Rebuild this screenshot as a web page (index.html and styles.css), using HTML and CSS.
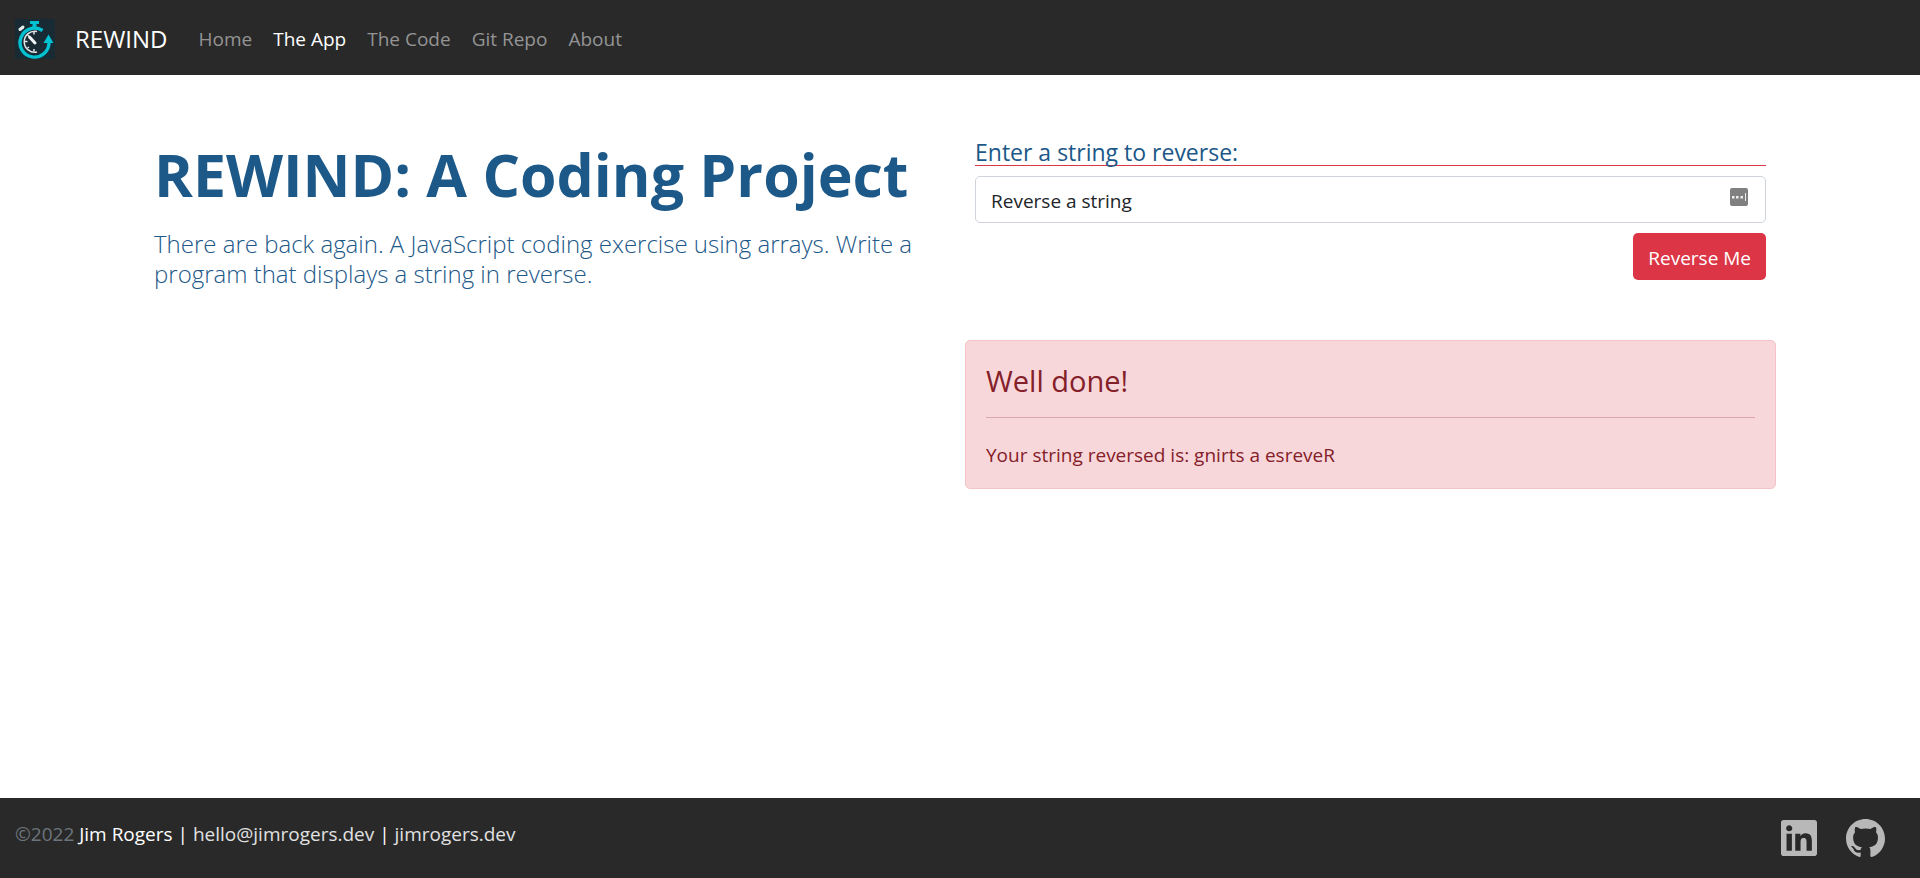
FILE: index.html
```html
<!DOCTYPE html>
<html lang="en">
<head>
<meta charset="utf-8">
<meta name="viewport" content="width=device-width, initial-scale=1">
<title>REWIND</title>
<link rel="stylesheet" href="styles.css">
</head>
<body>
<header class="navbar">
  <a class="brand" href="#">
    <svg class="brand-logo" viewBox="0 0 40 40" aria-hidden="true">
      <rect width="40" height="40" fill="#182a33"/>
      <path d="M15 2h9v3h-2.500v4h-4V5H15z" fill="#00c2d1"/>
      <path d="M27.500 11.500A14.500 14.500 0 1 0 34 23" fill="none" stroke="#00c2d1" stroke-width="3.400"/>
      <path d="M33.500 15.500 38.500 24h-10z" fill="#00c2d1"/>
      <path d="M22 12.500A10.500 10.500 0 1 0 22 33" fill="none" stroke="#dfe7ea" stroke-width="1.500"/>
      <path d="M19 13v2.500M10 22.500h2.500M19 30v2.500M12.500 16l1.500 1M12.500 29l1.500-1" stroke="#dfe7ea" stroke-width="1.500"/>
      <path d="M14.500 18 20 24" stroke="#f0f4f5" stroke-width="3" stroke-linecap="round"/>
      <path d="M5 10.500 8 8" stroke="#e8eeee" stroke-width="3" stroke-linecap="round"/>
    </svg>
    <span>REWIND</span>
  </a>
  <nav class="nav-links">
    <a class="nav-link" href="#">Home</a>
    <a class="nav-link active" href="#">The App</a>
    <a class="nav-link" href="#">The Code</a>
    <a class="nav-link" href="#">Git Repo</a>
    <a class="nav-link" href="#">About</a>
  </nav>
</header>

<main class="container">
  <section class="intro">
    <h1>REWIND: A Coding Project</h1>
    <p>There are back again. A JavaScript coding exercise using arrays. Write a program that displays a string in reverse.</p>
  </section>
  <section class="app">
    <form class="reverse-form">
      <label class="form-label" for="userString">Enter a string to reverse:</label>
      <div class="field">
        <input class="form-input" type="text" id="userString" value="Reverse a string">
        <svg class="field-icon" viewBox="0 0 18 18" aria-hidden="true">
          <rect width="18" height="18" rx="2" fill="#808080"/>
          <path d="M2 8h2.500v2.500H2zM6 8h2.500v2.500H6zM10.500 8H13v2.500h-2.500zM15 5h1v8h-1z" fill="#eee"/>
        </svg>
      </div>
      <button class="btn" type="button">Reverse Me</button>
    </form>
    <div class="alert" role="alert">
      <h2>Well done!</h2>
      <hr>
      <p>Your string reversed is: gnirts a esreveR</p>
    </div>
  </section>
</main>

<footer class="footer">
  <p class="copyright">©2022 <span>Jim Rogers | <a href="#">hello@jimrogers.dev</a> | <a href="#">jimrogers.dev</a></span></p>
  <div class="social">
    <a href="#" aria-label="LinkedIn">
      <svg class="linkedin" viewBox="0 0 448 448" aria-hidden="true"><path fill="currentColor" d="M416 0H31.900C14.300 0 0 14.500 0 32.300v383.400C0 433.500 14.300 448 31.900 448H416c17.600 0 32-14.500 32-32.300V32.300C448 14.500 433.600 0 416 0zM135.400 384H69V170.200h66.500V384zm-33.200-243c-21.300 0-38.500-17.300-38.500-38.500S80.900 64 102.200 64c21.200 0 38.500 17.300 38.500 38.500 0 21.300-17.200 38.500-38.500 38.500zm282.100 243h-66.400V280c0-24.800-.5-56.700-34.500-56.700-34.600 0-39.900 27-39.900 54.900V384h-66.400V170.200h63.700v29.200h.9c8.900-16.800 30.600-34.500 62.900-34.500 67.200 0 79.700 44.300 79.700 101.900V384z"/></svg>
    </a>
    <a href="#" aria-label="GitHub">
      <svg class="github" viewBox="0 0 16 16" aria-hidden="true"><path fill="currentColor" d="M8 0C3.580 0 0 3.580 0 8c0 3.540 2.290 6.530 5.470 7.590.4.070.55-.17.55-.38 0-.19-.01-.82-.01-1.490-2.010.37-2.530-.49-2.690-.94-.09-.23-.48-.94-.82-1.130-.28-.15-.68-.52-.01-.53.63-.01 1.080.58 1.230.82.72 1.210 1.870.87 2.330.66.07-.52.28-.87.51-1.070-1.780-.2-3.640-.89-3.640-3.950 0-.87.31-1.590.82-2.150-.08-.2-.36-1.020.08-2.120 0 0 .67-.21 2.200.82.64-.18 1.320-.27 2-.27s1.360.09 2 .27c1.530-1.040 2.200-.82 2.200-.82.44 1.100.16 1.920.08 2.120.51.56.82 1.270.82 2.150 0 3.070-1.870 3.750-3.650 3.950.29.25.54.73.54 1.480 0 1.070-.01 1.930-.01 2.200 0 .21.15.46.55.38A8.010 8.010 0 0 0 16 8c0-4.420-3.580-8-8-8z"/></svg>
    </a>
  </div>
</footer>
</body>
</html>
```

FILE: styles.css
```css
*, *::before, *::after { box-sizing: border-box; }

body {
  margin: 0;
  min-height: 100vh;
  display: flex;
  flex-direction: column;
  font: 19px/30px "Segoe UI", "Open Sans", "Noto Sans", sans-serif;
  color: #212529;
  background: #fff;
}

h1, h2, p { margin: 0; }
a { color: inherit; text-decoration: none; }

.navbar {
  display: flex;
  align-items: center;
  min-height: 75px;
  padding: 12px 15px 10px;
  gap: 21px;
  background: #292929;
}
.brand {
  display: flex;
  align-items: center;
  gap: 20px;
  color: #fff;
  font-size: 24px;
  line-height: 38px;
}
.brand-logo { width: 40px; height: 40px; }
.nav-links { display: flex; gap: 1px; }
.nav-link { padding: 10px; color: #949494; }
.nav-link.active { color: #fff; }

.container {
  flex: 1;
  width: 85%;
  margin: 0 auto;
  padding-top: 60px;
  display: grid;
  grid-template-columns: 1fr 1fr;
  gap: 10px;
  align-items: start;
}
.intro { padding: 0 10px; color: #1c5888; }
.intro h1 {
  font-size: 59px;
  line-height: 78px;
  font-weight: 700;
  margin-bottom: 16px;
}
.intro p { font-size: 24px; line-height: 30px; font-weight: 300; }

.reverse-form {
  display: flex;
  flex-direction: column;
  align-items: flex-end;
  gap: 10px;
  padding: 0 10px;
}
.form-label {
  width: 100%;
  padding-top: 4px;
  border-bottom: 1px solid #dc3545;
  color: #1c5888;
  font-size: 23px;
  line-height: 26px;
}
.field { position: relative; width: 100%; }
.form-input {
  display: block;
  width: 100%;
  height: 47px;
  padding: 8px 50px 6px 15px;
  border: 1px solid #ced4da;
  border-radius: 5px;
  background: #fff;
  color: #212529;
  font: inherit;
}
.field-icon { position: absolute; top: 12px; right: 18px; width: 18px; height: 18px; }
.btn {
  height: 47px;
  padding: 3px 15px 0;
  border: 0;
  border-radius: 5px;
  background: #dc3545;
  color: #fff;
  font: inherit;
}
.alert {
  margin-top: 60px;
  padding: 22px 20px 18px;
  border: 1px solid #f5c2c7;
  border-radius: 5px;
  background: #f8d7da;
  color: #842029;
}
.alert h2 { font-size: 29px; line-height: 36px; font-weight: 400; }
.alert hr { margin: 18px 0 22px; border: 0; border-top: 1px solid #dba7ad; }

.footer {
  display: flex;
  justify-content: space-between;
  align-items: center;
  min-height: 80px;
  padding: 0 35px 0 15px;
  background: #292929;
}
.copyright { color: #6c757d; padding-bottom: 8px; }
.copyright span { color: #fff; }
.copyright a { color: #e1e1e1; }
.social { display: flex; align-items: center; gap: 29px; color: #b8b8b8; }
.social a { display: flex; }
.linkedin { width: 36px; height: 36px; }
.github { width: 39px; height: 39px; }
```
